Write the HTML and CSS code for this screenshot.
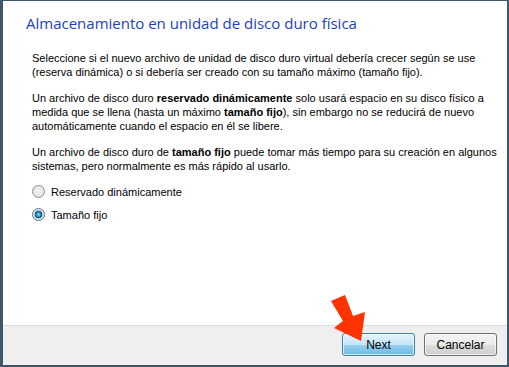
FILE: index.html
```html
<!DOCTYPE html>
<html lang="es">

<head>
  <meta charset="UTF-8">
  <title>Almacenamiento en unidad de disco duro física</title>
  <link rel="stylesheet" href="styles.css">
</head>

<body>
  <div class="wizard">
    <div class="wizard__page">
      <div class="wizard__title">Almacenamiento en unidad de disco duro física</div>
      <p class="wizard__text">Seleccione si el nuevo archivo de unidad de disco duro virtual debería crecer según se use<br>
        (reserva dinámica) o si debería ser creado con su tamaño máximo (tamaño fijo).</p>
      <p class="wizard__text">Un archivo de disco duro <b>reservado dinámicamente</b> solo usará espacio en su disco físico a<br>
        medida que se llena (hasta un máximo <b>tamaño fijo</b>), sin embargo no se reducirá de nuevo<br>
        automáticamente cuando el espacio en él se libere.</p>
      <p class="wizard__text">Un archivo de disco duro de <b>tamaño fijo</b> puede tomar más tiempo para su creación en algunos<br>
        sistemas, pero normalmente es más rápido al usarlo.</p>
      <div class="wizard__options">
        <label class="radio"><span class="radio__dot"></span>Reservado dinámicamente</label>
        <label class="radio radio_checked"><span class="radio__dot"></span>Tamaño fijo</label>
      </div>
    </div>
    <div class="wizard__footer">
      <button class="btn btn_default">Next</button>
      <button class="btn">Cancelar</button>
    </div>

    <!-- стрелка поверх кнопки -->
    <svg class="arrow" width="40" height="52" viewBox="0 0 40 52">
      <polygon points="3,10 17,4 25,25 37,21 33,50 6,37 15,30" fill="#ff3300" />
    </svg>
  </div>
</body>

</html>
```

FILE: styles.css
```css
* {
  box-sizing: border-box
}

body {
  margin: 0;
  background: #fff;
  font-family: "Liberation Sans", Tahoma, sans-serif;
  font-size: 11px;
  color: #000
}

.wizard {
  position: relative;
  display: flex;
  flex-direction: column;
  width: 509px;
  height: 367px;
  border-style: solid;
  border-color: #3d5868;
  border-width: 1px 2px 2px 3px;
  background: #fff
}

.wizard__page {
  flex: 1;
  padding: 11px 20px 0 29px
}

.wizard__title {
  margin-left: -6px;
  margin-bottom: 17px;
  font-family: "Open Sans", "Segoe UI", sans-serif;
  font-size: 15px;
  line-height: 22px;
  color: #1a3fc4
}

.wizard__text {
  margin: 0 0 12px;
  line-height: 14px;
  white-space: nowrap
}

.wizard__options {
  display: flex;
  flex-direction: column;
  gap: 10px;
  margin-top: 3px
}

.radio {
  display: flex;
  align-items: center;
  gap: 6px;
  height: 13px
}

.radio__dot {
  width: 13px;
  height: 13px;
  border-radius: 50%;
  border: 1px solid #8e8f8f;
  background: radial-gradient(circle at 50% 40%, #f4f4f4 0, #e2e2e2 70%, #cfcfcf 100%)
}

.radio_checked .radio__dot {
  border-color: #5d7587;
  background: radial-gradient(circle, #8fe6ff 0, #1c8ec4 28%, #0b4f7a 46%, #e8e8e8 54%, #dadada 100%)
}

.wizard__footer {
  display: flex;
  justify-content: flex-end;
  gap: 9px;
  height: 40px;
  padding: 7px 10px 0 0;
  background: #efefef;
  border-top: 1px solid #dcdcdc
}

.btn {
  width: 73px;
  height: 23px;
  font-family: inherit;
  font-size: 12px;
  color: #000;
  border: 1px solid #707070;
  border-radius: 3px;
  background: linear-gradient(#f2f2f2 0, #ebebeb 50%, #dddddd 51%, #cfcfcf 100%);
  box-shadow: inset 0 0 0 1px rgba(255, 255, 255, .7)
}

.btn_default {
  border-color: #3c7fb1;
  background: linear-gradient(#e5f4fc 0, #c4e5f6 50%, #98d1ef 51%, #6cbce6 100%)
}

.arrow {
  position: absolute;
  left: 325px;
  top: 290px
}
```
